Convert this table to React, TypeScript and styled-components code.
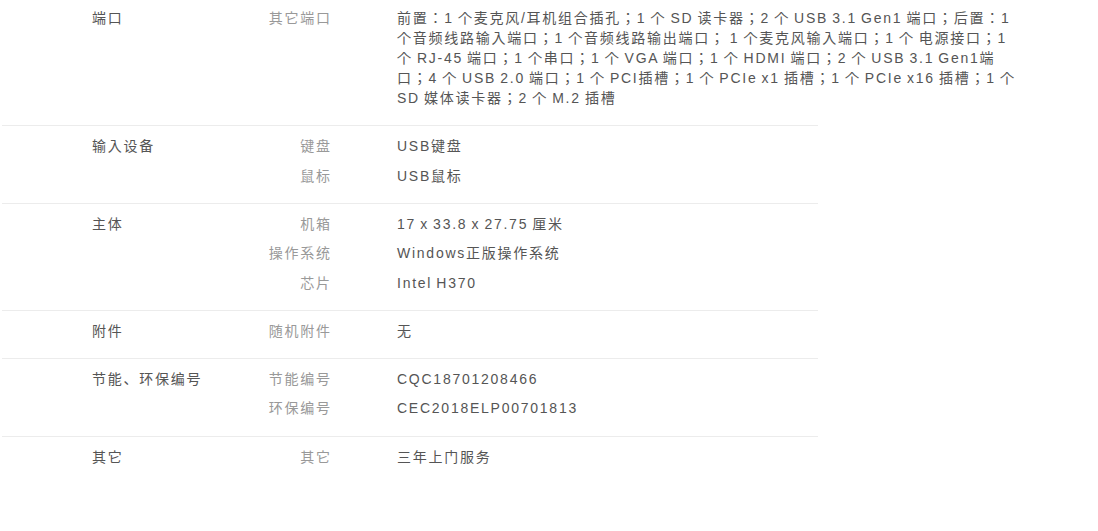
import styled, { createGlobalStyle } from "styled-components";

type Item = { label: string; value: string };
type Group = { title: string; items: Item[] };

const specs: Group[] = [
  {
    title: "端口",
    items: [
      {
        label: "其它端口",
        value:
          "前置：1 个麦克风/耳机组合插孔；1 个 SD 读卡器；2 个 USB 3.1 Gen1 端口；后置：1 个音频线路输入端口；1 个音频线路输出端口； 1 个麦克风输入端口；1 个 电源接口；1 个 RJ-45 端口；1 个串口；1 个 VGA 端口；1 个 HDMI 端口；2 个 USB 3.1 Gen1端口；4 个 USB 2.0 端口；1 个 PCI插槽；1 个 PCIe x1 插槽；1 个 PCIe x16 插槽；1 个 SD 媒体读卡器；2 个 M.2 插槽",
      },
    ],
  },
  {
    title: "输入设备",
    items: [
      { label: "键盘", value: "USB键盘" },
      { label: "鼠标", value: "USB鼠标" },
    ],
  },
  {
    title: "主体",
    items: [
      { label: "机箱", value: "17 x 33.8 x 27.75 厘米" },
      { label: "操作系统", value: "Windows正版操作系统" },
      { label: "芯片", value: "Intel H370" },
    ],
  },
  {
    title: "附件",
    items: [{ label: "随机附件", value: "无" }],
  },
  {
    title: "节能、环保编号",
    items: [
      { label: "节能编号", value: "CQC18701208466" },
      { label: "环保编号", value: "CEC2018ELP00701813" },
    ],
  },
  {
    title: "其它",
    items: [{ label: "其它", value: "三年上门服务" }],
  },
];

const GlobalStyle = createGlobalStyle`
  html, body {
    margin: 0;
    background: #fff;
  }
  body {
    font-family: "Liberation Sans", "Noto Sans CJK JP", "Noto Sans CJK SC", sans-serif;
    font-size: 14px;
  }
`;

const SpecTable = styled.div`
  width: 816px;
  margin-left: 2px;
`;

const GroupRow = styled.div`
  display: flex;
  padding: 10px 0 17px 90px;
  border-bottom: 1px solid #ececec;
  line-height: 20px;
  letter-spacing: 1.75px;
  word-spacing: -1.5px;

  &:first-child {
    padding-top: 8px;
  }
  &:last-child {
    border-bottom: none;
  }
  &:nth-child(5) {
    padding-bottom: 18px;
  }
`;

const GroupTitle = styled.div`
  width: 138px;
  flex-shrink: 0;
  color: #555;
`;

const Items = styled.div`
  display: flex;
  flex-direction: column;
  gap: 9.5px;
`;

const ItemRow = styled.div`
  display: flex;
  align-items: flex-start;
`;

const ItemLabel = styled.div`
  width: 101.75px;
  flex-shrink: 0;
  text-align: right;
  color: #999;
`;

const ItemValue = styled.div`
  width: 622px;
  flex-shrink: 0;
  margin-left: 65.25px;
  color: #555;
`;

export default function App() {
  return (
    <>
      <GlobalStyle />
      <SpecTable>
        {specs.map((group) => (
          <GroupRow key={group.title}>
            <GroupTitle>{group.title}</GroupTitle>
            <Items>
              {group.items.map((item) => (
                <ItemRow key={item.label}>
                  <ItemLabel>{item.label}</ItemLabel>
                  <ItemValue>{item.value}</ItemValue>
                </ItemRow>
              ))}
            </Items>
          </GroupRow>
        ))}
      </SpecTable>
    </>
  );
}
